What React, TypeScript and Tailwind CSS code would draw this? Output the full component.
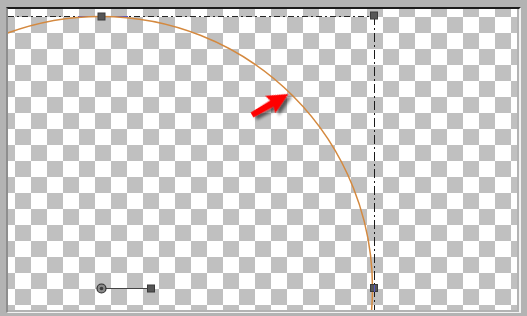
const ARROW = "0,-2.8 23,-3.4 21,-10 42,0 21,10 23,3.4 0,2.8";

function Handle({ x, y }: { x: number; y: number }) {
  return (
    <rect
      x={x - 3.5}
      y={y - 3.5}
      width={7}
      height={7}
      fill="#565656"
      stroke="#3a3a3a"
      strokeWidth={1}
    />
  );
}

function ArcCanvas() {
  return (
    <svg
      className="absolute inset-0"
      width={509}
      height={301}
      viewBox="8 9 509 301"
    >
      <defs>
        <filter id="arrowShadow" x="-30%" y="-30%" width="160%" height="180%">
          <feDropShadow dx="2" dy="4" stdDeviation="1.6" floodColor="#000" floodOpacity="0.55" />
        </filter>
      </defs>

      {/* bounding box guides */}
      <line x1={8} y1={16.5} x2={374} y2={16.5} stroke="#262626" strokeWidth={1} strokeDasharray="6 3 2 3" />
      <line x1={374.5} y1={16} x2={374.5} y2={310} stroke="#1a1a1a" strokeWidth={1} strokeDasharray="9 3 2 3" />
      <line x1={78} y1={16.5} x2={128} y2={16.5} stroke="#5454c8" strokeWidth={1} />

      {/* the arc */}
      <circle cx={101} cy={288} r={271.5} fill="none" stroke="#d4893f" strokeWidth={1.5} />

      {/* rotation handle */}
      <line x1={105} y1={288.5} x2={148} y2={288.5} stroke="#444" strokeWidth={1} />
      <circle cx={101.5} cy={288.5} r={4.5} fill="#8a8a8a" stroke="#2e2e2e" strokeWidth={1.2} />
      <circle cx={101.5} cy={288.5} r={1.8} fill="#3c3c3c" />
      <Handle x={151} y={288.5} />

      <Handle x={101.5} y={16.5} />
      <Handle x={374} y={15.5} />
      <Handle x={374} y={288} />
      <line x1={374.5} y1={285} x2={374.5} y2={292} stroke="#5454c8" strokeWidth={1} />

      {/* pointer */}
      <polygon
        points={ARROW}
        fill="#ff0000"
        filter="url(#arrowShadow)"
        transform="translate(252 115) rotate(-30)"
      />
    </svg>
  );
}

export default function App() {
  return (
    <div className="w-[527px] h-[316px] bg-[#b3b3b3] pt-[7px] pl-[6px] pr-[6px] pb-[3px] flex">
      <div className="flex-1 flex flex-col border-t-2 border-t-[#1c1c1c] border-l-2 border-l-[#8e8e8e] border-r-2 border-r-[#f2f2f2] border-b border-b-[#f2f2f2]">
        <div className="relative flex-1 mr-[2px] mb-[2px] overflow-hidden bg-[image:conic-gradient(#c0c0c0_25%,#ffffff_0_50%,#c0c0c0_0_75%,#ffffff_0)] bg-[length:32px_32px] bg-[position:7px_8px]">
          <ArcCanvas />
        </div>
      </div>
    </div>
  );
}
